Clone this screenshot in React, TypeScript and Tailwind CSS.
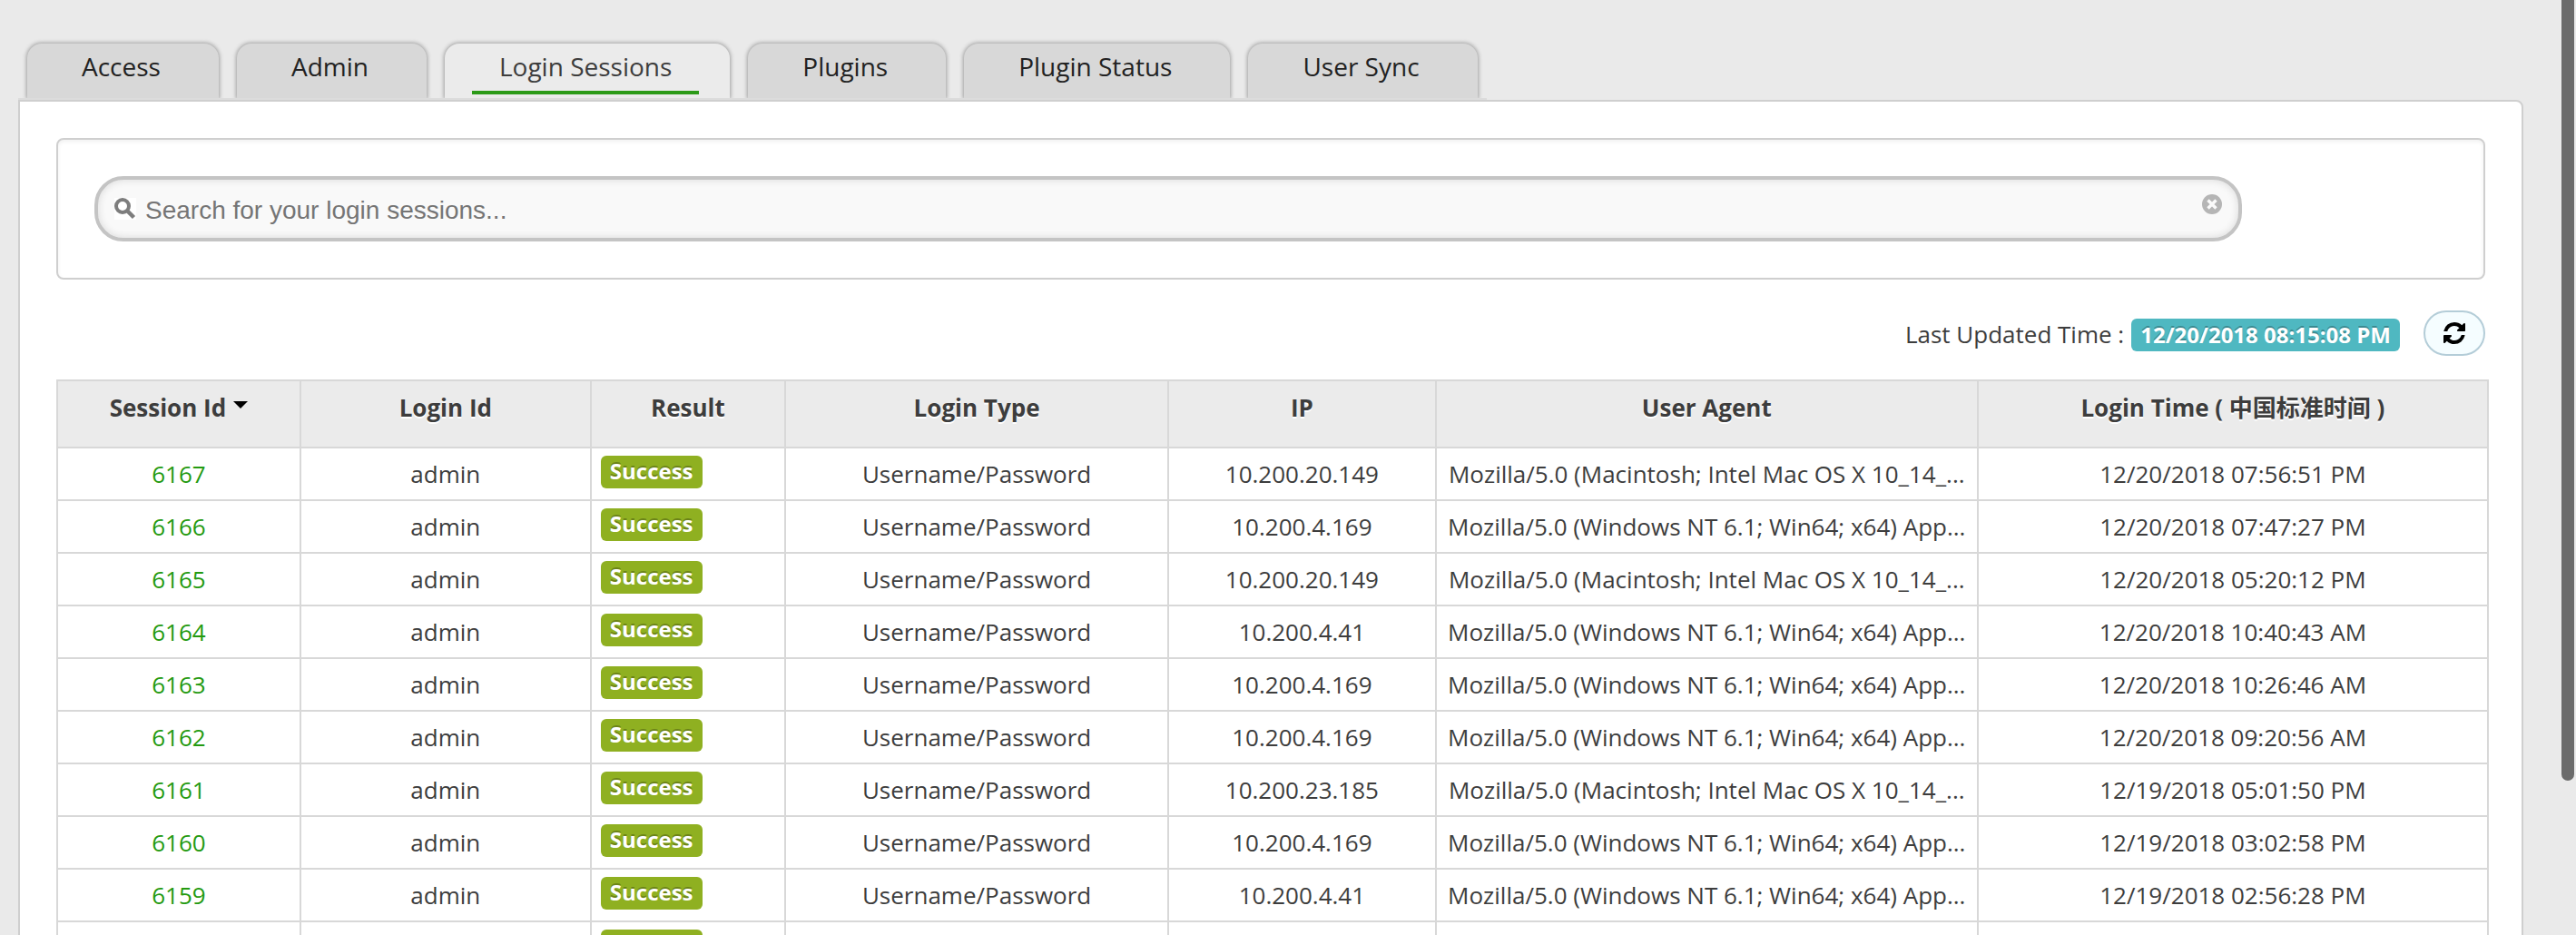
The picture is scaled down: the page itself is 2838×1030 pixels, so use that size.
import { useState } from "react";

const tabs = ["Access", "Admin", "Login Sessions", "Plugins", "Plugin Status", "User Sync"];

const mac = "Mozilla/5.0 (Macintosh; Intel Mac OS X 10_14_...";
const win = "Mozilla/5.0 (Windows NT 6.1; Win64; x64) App...";

const sessions = [
  { id: 6167, ip: "10.200.20.149", agent: mac, time: "12/20/2018 07:56:51 PM" },
  { id: 6166, ip: "10.200.4.169", agent: win, time: "12/20/2018 07:47:27 PM" },
  { id: 6165, ip: "10.200.20.149", agent: mac, time: "12/20/2018 05:20:12 PM" },
  { id: 6164, ip: "10.200.4.41", agent: win, time: "12/20/2018 10:40:43 AM" },
  { id: 6163, ip: "10.200.4.169", agent: win, time: "12/20/2018 10:26:46 AM" },
  { id: 6162, ip: "10.200.4.169", agent: win, time: "12/20/2018 09:20:56 AM" },
  { id: 6161, ip: "10.200.23.185", agent: mac, time: "12/19/2018 05:01:50 PM" },
  { id: 6160, ip: "10.200.4.169", agent: win, time: "12/19/2018 03:02:58 PM" },
  { id: 6159, ip: "10.200.4.41", agent: win, time: "12/19/2018 02:56:28 PM" },
  { id: 6158, ip: "10.200.4.41", agent: win, time: "12/19/2018 02:41:07 PM" },
];

function SearchIcon() {
  return (
    <svg viewBox="0 0 24 24" className="size-6 shrink-0 bg-white" fill="none" stroke="#7d7d7d" aria-hidden="true">
      <circle cx="9" cy="9" r="7" strokeWidth="4" />
      <path d="M14 14l7.500 7.500" strokeWidth="4.5" />
    </svg>
  );
}

function ClearIcon() {
  return (
    <svg viewBox="0 0 22 22" className="size-[22px]" aria-hidden="true">
      <circle cx="11" cy="11" r="11" fill="#b5b5b5" />
      <path d="M6.500 6.500l9 9M15.500 6.500l-9 9" stroke="#fafafa" strokeWidth="3.4" />
    </svg>
  );
}

function RefreshIcon() {
  return (
    <svg viewBox="0 0 1536 1536" className="size-6" fill="#000" aria-hidden="true">
      <path d="M1511 928q0 5-1 7-64 268-268 434.500T764 1536q-146 0-282.500-55T238 1324l-129 129q-19 19-45 19t-45-19-19-45V960q0-26 19-45t45-19h448q26 0 45 19t19 45-19 45l-137 137q71 66 161 102t187 36q134 0 250-65t186-179q11-17 53-117 8-23 30-23h192q13 0 22.500 9.500t9.500 22.500zm25-800v448q0 26-19 45t-45 19h-448q-26 0-45-19t-19-45 19-45l138-138Q969 256 768 256q-134 0-250 65T332 500q-11 17-53 117-8 23-30 23H50q-13 0-22.500-9.500T18 608v-7q65-268 270-434.500T768 0q146 0 284 55.500T1297 212l130-129q19-19 45-19t45 19 19 45z" />
    </svg>
  );
}

const cell = "border-2 border-[#d8d8d8] px-2";

export default function App() {
  const [query, setQuery] = useState("");

  return (
    <div className="relative h-screen overflow-hidden bg-[#eaeaea] pt-12 pr-[58px] pl-5 font-['Open_Sans','Noto_Sans_CJK_SC',sans-serif] text-[26px] text-[#3d3d3d]">
      <nav className="flex w-fit gap-5 border-b-4 border-[#dcdcdc] px-2.5" aria-label="Sections">
        {tabs.map((tab) => {
          const active = tab === "Login Sessions";
          return (
            <a
              key={tab}
              href="#"
              aria-current={active ? "page" : undefined}
              className={
                active
                  ? "flex h-[60px] flex-col rounded-t-2xl bg-[#ebebeb] pt-1 pr-[34px] pl-[30px] text-[28px] leading-[42px] text-[#3d3d3d] shadow-[0_0_4px_1px_#a0a0a0] [clip-path:inset(-6px_-6px_0_-6px)]"
                  : "flex h-[60px] flex-col rounded-t-2xl bg-[#d8d8d8] pt-1 pr-[34px] pl-[30px] text-[28px] leading-[42px] text-[#222] shadow-[0_0_4px_1px_#a0a0a0] [clip-path:inset(-6px_-6px_0_-6px)]"
              }
            >
              <span className={active ? "border-b-4 border-[#2c9a18] px-[30px] pb-1.5" : "px-[30px]"}>{tab}</span>
            </a>
          );
        })}
      </nav>

      <main className="-mt-0.5 rounded-tr-lg border-2 border-[#cfcfcf] bg-white px-10 pt-10">
        <form
          role="search"
          onSubmit={(e) => e.preventDefault()}
          className="rounded-lg border-2 border-[#cfcfcf] p-10 shadow-[inset_0_2px_4px_#f0f0f0]"
        >
          <div className="flex h-[72px] w-[91.3%] items-center gap-2.5 rounded-[32px] border-4 border-[#c4c4c4] bg-[#f9f9f9] px-[18px] shadow-[inset_0_0_8px_#d8d8d8]">
            <SearchIcon />
            <input
              type="text"
              aria-label="Search login sessions"
              placeholder="Search for your login sessions..."
              value={query}
              onChange={(e) => setQuery(e.target.value)}
              className="min-w-0 flex-1 bg-transparent pt-1 font-['Liberation_Sans',sans-serif] text-[28px] outline-none placeholder:text-[#757575]"
            />
            <button type="button" aria-label="Clear search" onClick={() => setQuery("")} className="mb-2.5">
              <ClearIcon />
            </button>
          </div>
        </form>

        <div className="mt-[34px] flex h-[50px] items-center justify-end">
          <span className="pt-0.5">Last Updated Time :</span>
          <span className="mt-1 ml-2 rounded-md bg-[#4fb8c1] px-2.5 text-2xl leading-9 font-bold text-white [text-shadow:0_-2px_0_rgba(0,0,0,0.25)]">
            12/20/2018 08:15:08 PM
          </span>
          <button
            type="button"
            aria-label="Refresh"
            className="ml-[26px] flex h-[50px] w-[68px] items-center justify-center rounded-[25px] border-2 border-[#b4cdd8] bg-[#f5fdff]"
          >
            <RefreshIcon />
          </button>
        </div>

        <table className="mt-[26px] -mr-1 w-[calc(100%+4px)] table-fixed border-collapse text-center">
          <colgroup>
            <col className="w-[10%]" />
            <col className="w-[11.95%]" />
            <col className="w-[8%]" />
            <col className="w-[15.76%]" />
            <col className="w-[11%]" />
            <col className="w-[22.3%]" />
            <col />
          </colgroup>
          <thead>
            <tr className="h-[74px] bg-[#ebebeb] align-top font-bold [text-shadow:0_2px_0_#fff]">
              <th className={`${cell} pt-2.5`} aria-sort="descending">
                <button type="button" className="inline-flex items-start gap-2">
                  Session Id
                  <svg viewBox="0 0 16 8" className="mt-3 h-2 w-4" aria-hidden="true">
                    <path d="M0 0h16l-8 8z" fill="#000" />
                  </svg>
                </button>
              </th>
              <th className={`${cell} pt-2.5`}>Login Id</th>
              <th className={`${cell} pt-2.5`}>Result</th>
              <th className={`${cell} pt-2.5`}>Login Type</th>
              <th className={`${cell} pt-2.5`}>IP</th>
              <th className={`${cell} pt-2.5`}>User Agent</th>
              <th className={`${cell} pt-2.5`}>Login Time ( 中国标准时间 )</th>
            </tr>
          </thead>
          <tbody>
            {sessions.map((s) => (
              <tr key={s.id} className="h-[58px]">
                <td className={cell}>
                  <a href="#" className="text-[#249a10]">{s.id}</a>
                </td>
                <td className={cell}>admin</td>
                <td className="border-2 border-[#d8d8d8] px-2.5 text-left align-top">
                  <span className="mt-2 block w-fit rounded-md bg-[#8fb021] px-2.5 pb-0.5 text-2xl leading-[34px] font-bold text-white [text-shadow:0_-2px_0_rgba(0,0,0,0.25)]">
                    Success
                  </span>
                </td>
                <td className={cell}>Username/Password</td>
                <td className={cell}>{s.ip}</td>
                <td className={`${cell} whitespace-nowrap`}>{s.agent}</td>
                <td className={cell}>{s.time}</td>
              </tr>
            ))}
          </tbody>
        </table>
      </main>

      <div className="absolute top-0 right-0.5 h-[83.5%] w-3.5 rounded-b-full bg-[#6b6b6b]" />
    </div>
  );
}
